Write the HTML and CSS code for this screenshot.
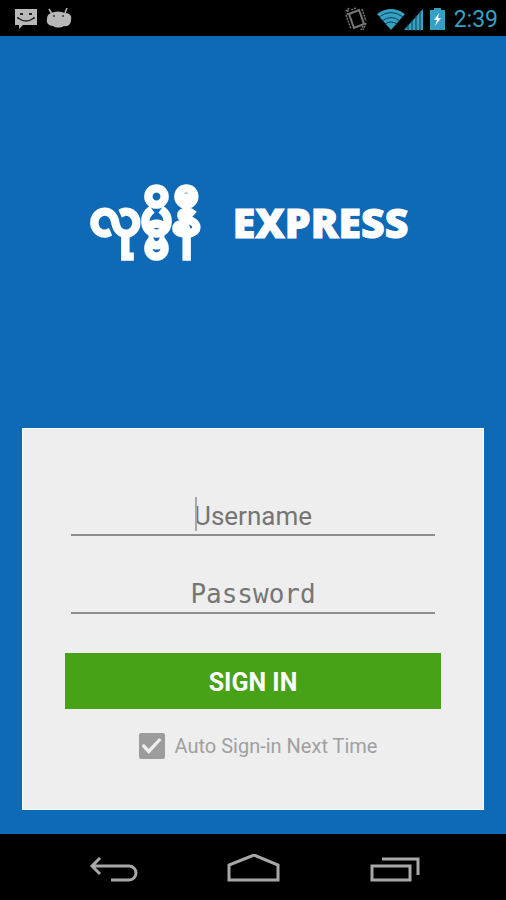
FILE: index.html
```html
<!DOCTYPE html>
<html lang="en">
<head>
<meta charset="utf-8">
<meta name="viewport" content="width=device-width, initial-scale=1">
<title>Express – Sign in</title>
<link rel="stylesheet" href="styles.css">
</head>
<body>
<header class="status">
  <div class="status-group">
    <svg width="24" height="22" viewBox="0 0 24 22" aria-hidden="true"><path fill="#b8b8b8" d="M1 1h22v16H9l-4 4v-4H1z"/><path fill="none" stroke="#222" stroke-width="1.5" d="M4 10q8 6 16 0M4 9v2M20 9v2"/><path fill="#222" d="M6 5h3v2H6zM15 5h3v2h-3z"/></svg>
    <svg width="26" height="22" viewBox="0 0 26 22" aria-hidden="true"><path stroke="#b8b8b8" stroke-width="1.5" d="M3 1l3 5M21 0l-2 5"/><path fill="#b8b8b8" d="M5 5q7-3 14 0c5 0 7 3 6 7 0 4-3 7-7 6-3 2-8 2-11 0-5 0-7-4-6-7 0-3 1-5 4-6z"/><path fill="#555" d="M7 7h2v2H7zM16 7h2v2h-2z"/></svg>
  </div>
  <div class="status-group status-right">
    <svg width="24" height="26" viewBox="0 0 24 26" aria-hidden="true"><g fill="none" stroke="#777"><path stroke-width="2" d="M5 8l10-4 5 14-10 4z"/><path stroke-width="1.5" stroke-dasharray="2 1" d="M2 9l5 14M4 4l-1 6M5 2L2 5M18 3l4 12M20 17l-3 7M22 17l-3 7M12 2L7 4"/></g></svg>
    <svg width="50" height="26" viewBox="0 0 50 26" aria-hidden="true"><path fill="#33a0c4" d="M1 8q14-10 28 0L15 24z"/><g fill="none" stroke="#0a4152" stroke-width="1"><path d="M3 11q12-9 24 0M6 15q9-7 18 0M9 18q6-4 12 0"/></g><path fill="#33a0c4" d="M47 3v21H28z"/><path stroke="#0a4152" stroke-width="1" d="M32 18v7M36 14v11M40 9v16M44 5v20"/></svg>
    <svg class="battery" width="16" height="24" viewBox="0 0 16 24" aria-hidden="true"><path fill="#33a0c4" d="M4 1h7v2h4v20H0V3h4z"/><path fill="#fff" d="M9 6l-5 7h3l-2 6 6-8H8z"/></svg>
    <time>2:39</time>
  </div>
</header>
<main>
  <h1 class="brand"><span class="brand-native" lang="my">လုမ္ဗိနီ</span><span class="brand-latin">EXPRESS</span></h1>
  <form class="card">
    <label class="field focused"><input class="user" type="text" placeholder="Username" aria-label="Username"></label>
    <label class="field"><input class="pass" type="password" placeholder="Password" aria-label="Password"></label>
    <button class="submit" type="button">SIGN IN</button>
    <label class="auto"><input type="checkbox" checked>Auto Sign-in Next Time</label>
  </form>
</main>
<nav class="nav">
  <button type="button" aria-label="Back"><svg width="56" height="30" viewBox="0 0 56 30"><path d="M14 4L6 12l8 8M7 12h36a7 7 0 0 1 0 14H25"/></svg></button>
  <button type="button" aria-label="Home"><svg width="56" height="30" viewBox="0 0 56 30"><path d="M3 26V11L28 1l24 10v15z"/></svg></button>
  <button type="button" aria-label="Recent apps"><svg width="56" height="30" viewBox="0 0 56 30"><path d="M6 12h38v14H6zM16 5h36v16"/></svg></button>
</nav>
</body>
</html>
```
FILE: styles.css
```css
* { box-sizing: border-box; }

body {
  margin: 0;
  min-height: 100vh;
  display: flex;
  flex-direction: column;
  background: #0e6ab7;
  font-family: Roboto, "Liberation Sans", sans-serif;
}

.status {
  height: 36px;
  padding: 2px 8px 0 14px;
  display: flex;
  align-items: center;
  justify-content: space-between;
  background: #000;
  color: #33a0c4;
  font-size: 23px;
}

.status-group { display: flex; align-items: center; gap: 8px; }
.battery { margin-left: -4px; }

main {
  flex: 1;
  display: flex;
  flex-direction: column;
  padding: 0 22px 24px;
}

.brand {
  flex: 1;
  margin: 0;
  padding: 0 8px 20px 0;
  display: flex;
  align-items: center;
  justify-content: center;
  gap: 32px;
  color: #fff;
}

.brand-native {
  font-size: 54px;
  line-height: 60px;
  padding-bottom: 12px;
  -webkit-text-stroke: 4px #fff;
}

.brand-latin {
  font: 800 41px/48px "Open Sans", sans-serif;
  -webkit-text-stroke: 1px #fff;
}

.card {
  padding: 64px 42px 50px;
  display: flex;
  flex-direction: column;
  background: #eee;
  border: 1px solid #fff;
}

.field { display: block; position: relative; margin: 0 6px 35px; }

.field input {
  display: block;
  width: 100%;
  height: 43px;
  padding: 4px 0 0;
  border: 0;
  border-bottom: 2px solid #8c8c8c;
  border-radius: 0;
  outline: 0;
  background: none;
  text-align: center;
  color: #555;
  font-size: 26px;
}

.focused::before {
  content: "";
  position: absolute;
  top: 4px;
  left: calc(50% - 58px);
  width: 2px;
  height: 34px;
  background: #a8a8a8;
}

.field input::placeholder { color: #757575; }
.user { font-family: Roboto, sans-serif; }
.pass { font-family: "DejaVu Sans Mono", monospace; }

.submit {
  height: 56px;
  margin-top: 4px;
  padding: 2px 0 0;
  border: 0;
  background: #48a217;
  color: #fff;
  font: 700 25px Roboto, sans-serif;
}

.auto {
  margin-top: 24px;
  padding-left: 10px;
  display: flex;
  align-items: center;
  justify-content: center;
  gap: 10px;
  color: #a0a0a0;
  font-size: 20px;
}

.auto input {
  appearance: none;
  width: 26px;
  height: 26px;
  margin: 0;
  display: grid;
  place-items: center;
  border-radius: 2px;
  background: #9c9c9c;
}

.auto input:checked::before {
  content: "";
  width: 20px;
  height: 16px;
  background: #eee;
  clip-path: polygon(0 50%, 12% 36%, 36% 68%, 88% 0, 100% 12%, 36% 100%);
}

.nav {
  height: 66px;
  padding: 4px 84px 0 86px;
  display: flex;
  align-items: center;
  justify-content: space-between;
  background: #000;
}

.nav button {
  padding: 0;
  border: 0;
  background: none;
  line-height: 0;
}

.nav path { fill: none; stroke: #a8a8a8; stroke-width: 3; }
```
